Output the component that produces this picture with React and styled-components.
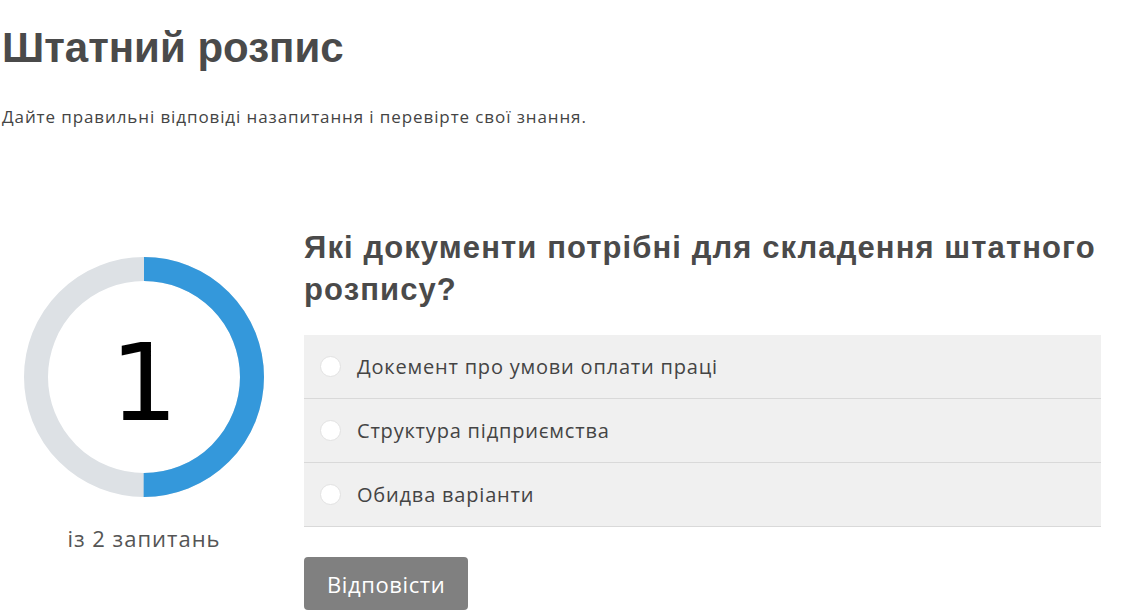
import React, { useState } from 'react';
import styled, { createGlobalStyle } from 'styled-components';

const GlobalStyle = createGlobalStyle`
  body {
    margin: 0;
    background: #ffffff;
    font-family: "Open Sans", "Noto Sans", sans-serif;
    color: #444444;
  }
`;

const Page = styled.div`
  padding: 0 0 0 2px;
  width: 1124px;
  height: 616px;
  overflow: hidden;
  box-sizing: border-box;
`;

const Title = styled.h1`
  margin: 0;
  padding-top: 22px;
  font-family: "Liberation Sans", Arial, sans-serif;
  font-weight: 700;
  font-size: 42px;
  line-height: 52px;
  color: #4a4a4a;
`;

const Lead = styled.p`
  margin: 31px 0 0;
  font-size: 17px;
  letter-spacing: 0.9px;
  line-height: 24px;
  color: #444444;
`;

const Quiz = styled.div`
  display: grid;
  grid-template-columns: 284px 797px;
  column-gap: 18px;
  margin-top: 98px;
`;

const Progress = styled.div`
  display: flex;
  flex-direction: column;
  align-items: center;
  padding-top: 30px;
`;

const Ring = styled.div`
  position: relative;
  width: 240px;
  height: 240px;
`;

const RingNumber = styled.div`
  position: absolute;
  inset: 0;
  display: flex;
  align-items: center;
  justify-content: center;
  font-family: "DejaVu Sans", sans-serif;
  font-weight: 400;
  font-size: 107px;
  color: #000000;
  padding-top: 12px;
`;

const Caption = styled.div`
  margin-top: 26px;
  font-size: 22px;
  letter-spacing: 1px;
  color: #555555;
`;

const Question = styled.h2`
  margin: 0 0 24px;
  font-family: "Liberation Sans", Arial, sans-serif;
  font-weight: 700;
  font-size: 31px;
  letter-spacing: 1.1px;
  line-height: 42px;
  color: #4a4a4a;
`;

const Options = styled.ul`
  list-style: none;
  margin: 0;
  padding: 0;
  background: #f0f0f0;
`;

const Option = styled.li`
  display: flex;
  align-items: center;
  gap: 16px;
  height: 63px;
  padding: 0 16px;
  border-bottom: 1px solid #d9d9d9;
  font-size: 20px;
  letter-spacing: 0.8px;
  color: #444444;
  cursor: pointer;
`;

const Radio = styled.span`
  width: 21px;
  height: 21px;
  border-radius: 50%;
  background: #ffffff;
  border: 1px solid ${p => (p.$checked ? '#3498db' : '#e2e2e2')};
  box-shadow: inset 0 0 0 ${p => (p.$checked ? '5px #3498db' : '0 transparent')};
  box-sizing: border-box;
  flex: none;
`;

const Submit = styled.button`
  margin-top: 30px;
  height: 53px;
  padding: 0 23px;
  border: none;
  border-radius: 4px;
  background: #808080;
  color: #ffffff;
  font-family: "Open Sans", sans-serif;
  font-size: 22px;
  letter-spacing: 0.6px;
  cursor: pointer;
`;

const answers = ['Докемент про умови оплати праці', 'Структура підприємства', 'Обидва варіанти'];

const ProgressRing = ({ current, total }) => {
  const r = 108;
  const c = 2 * Math.PI * r;
  const part = (current / total) * c;
  return (
    <Ring>
      <svg width="240" height="240" viewBox="0 0 240 240">
        <circle cx="120" cy="120" r={r} fill="none" stroke="#dde1e5" strokeWidth="24" />
        <circle
          cx="120"
          cy="120"
          r={r}
          fill="none"
          stroke="#3498db"
          strokeWidth="24"
          strokeDasharray={`${part} ${c}`}
          transform="rotate(-90 120 120)"
        />
      </svg>
      <RingNumber>{current}</RingNumber>
    </Ring>
  );
};

export default function App() {
  const [picked, setPicked] = useState(null);
  return (
    <>
      <GlobalStyle />
      <Page>
        <Title>Штатний розпис</Title>
        <Lead>Дайте правильні відповіді назапитання і перевірте свої знання.</Lead>
        <Quiz>
          <Progress>
            <ProgressRing current={1} total={2} />
            <Caption>із 2 запитань</Caption>
          </Progress>
          <div>
            <Question>Які документи потрібні для складення штатного розпису?</Question>
            <Options>
              {answers.map((a, i) => (
                <Option key={a} onClick={() => setPicked(i)}>
                  <Radio $checked={picked === i} />
                  {a}
                </Option>
              ))}
            </Options>
            <Submit>Відповісти</Submit>
          </div>
        </Quiz>
      </Page>
    </>
  );
}
